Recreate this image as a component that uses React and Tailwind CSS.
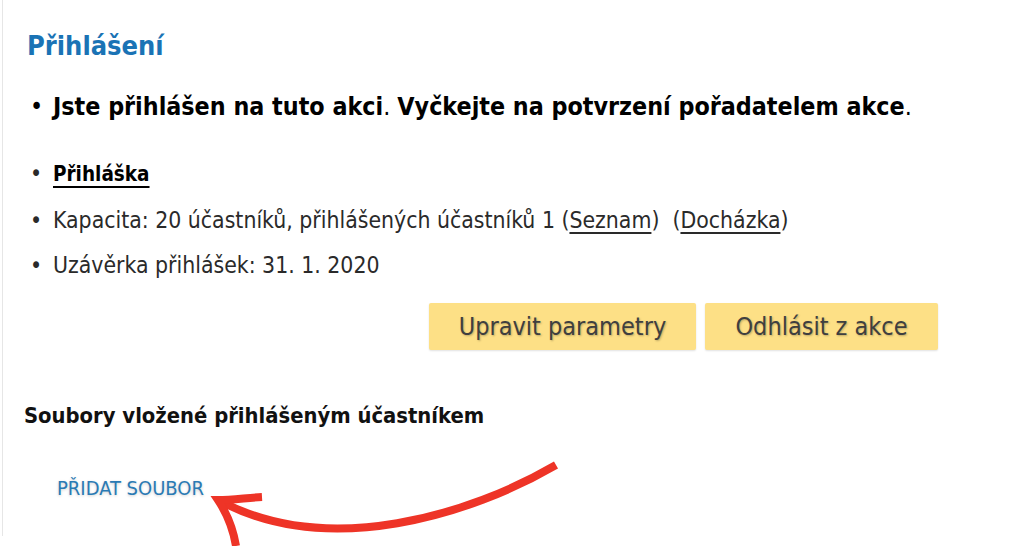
import React from "react";

const F = { fontFamily: '"DejaVu Sans Condensed", "DejaVu Sans", sans-serif' };

function Bullet({ children, className = "" }) {
  return (
    <li className={"flex items-baseline " + className}>
      <span className="w-[26px] shrink-0 pl-[3px]">•</span>
      <span className="whitespace-nowrap">{children}</span>
    </li>
  );
}

export default function App() {
  return (
    <div className="relative h-[546px] w-[1022px] overflow-hidden bg-white text-[#111]" style={F}>
      <div className="ml-[2px] flex h-[536px] border-l-[1.5px] border-[#e6e6e6]">
        <div className="flex w-[935px] flex-col pl-[24px] pt-[28px]">
          <h1 className="text-[27px] font-bold leading-[36px] text-[#1a73b5]">Přihlášení</h1>
          <ul className="mt-[27px] text-[24.8px] leading-[32px] text-black">
            <Bullet>
              <b>Jste přihlášen na tuto akci</b>. <b>Vyčkejte na potvrzení pořadatelem akce</b>.
            </Bullet>
          </ul>
          <ul className="mt-[35px] flex flex-col gap-[15.5px] text-[22.8px] leading-[30px] text-[#2a2a2a]">
            <Bullet>
              <b className="text-[20.5px] text-black underline decoration-[2px] underline-offset-[5px]">Přihláška</b>
            </Bullet>
            <Bullet>
              Kapacita: 20 účastníků, přihlášených účastníků 1 (<span className="underline underline-offset-[4px]">Seznam</span>)&nbsp; (<span className="underline underline-offset-[4px]">Docházka</span>)
            </Bullet>
            <Bullet>Uzávěrka přihlášek: 31. 1. 2020</Bullet>
          </ul>
          <div className="mt-[23px] flex justify-end gap-[9px]">
            <button
              className="h-[47px] w-[267px] rounded-[2px] bg-[#fde086] text-[25px] text-[#3f3f3f] shadow-[0_1px_2px_rgba(0,0,0,0.12)]"
              style={{ ...F, textShadow: "1px 1px 2px rgba(0,0,0,0.25)" }}
            >
              Upravit parametry
            </button>
            <button
              className="h-[47px] w-[233px] rounded-[2px] bg-[#fde086] text-[25px] text-[#3f3f3f] shadow-[0_1px_2px_rgba(0,0,0,0.12)]"
              style={{ ...F, textShadow: "1px 1px 2px rgba(0,0,0,0.25)" }}
            >
              Odhlásit z akce
            </button>
          </div>
          <h2 className="-ml-[3px] mt-[51px] text-[21.8px] font-bold leading-[30px] text-[#111]">
            Soubory vložené přihlášeným účastníkem
          </h2>
          <div className="mt-[45px] pl-[30px] leading-[24px]">
            <span
              className="text-[20px] uppercase text-[#2a7ab4]"
              style={{ textShadow: "0 1px 3px rgba(0,0,0,0.2)" }}
            >
              Přidat soubor
            </span>
          </div>
        </div>
      </div>
      <svg className="absolute left-0 top-0" width="1022" height="546" viewBox="0 0 1022 546">
        <path
          d="M556 465 C 470 515, 330 558, 222 502"
          fill="none"
          stroke="#ee3427"
          strokeWidth="8"
        />
        <path
          d="M262 497 C 245 498, 232 500, 218 500 C 226 512, 233 528, 236 546"
          fill="none"
          stroke="#ee3427"
          strokeWidth="8"
          strokeLinejoin="miter"
        />
      </svg>
    </div>
  );
}
